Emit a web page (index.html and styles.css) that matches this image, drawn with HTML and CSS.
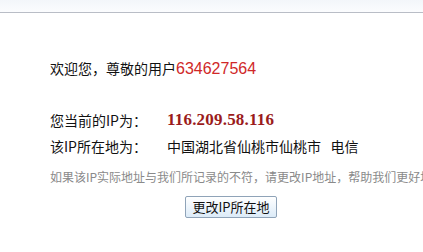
FILE: index.html
```html
<!DOCTYPE html>
<html>
<head>
<meta charset="utf-8">
<link rel="stylesheet" href="styles.css">
</head>
<body>
<div class="topbar"></div>
<div class="content">
  <div class="welcome">欢迎您，尊敬的用户<span class="uid">634627564</span></div>
  <div class="row ip-row"><span class="label">您当前的IP为：</span><span class="ip">116.209.58.116</span></div>
  <div class="row"><span class="label">该IP所在地为：</span><span class="loc">中国湖北省仙桃市仙桃市&nbsp;&nbsp; 电信</span></div>
  <div class="note">如果该IP实际地址与我们所记录的不符，请更改IP地址，帮助我们更好地为您服务。</div>
  <div class="actions"><button class="btn">更改IP所在地</button></div>
</div>
</body>
</html>
```
FILE: styles.css
```css
html, body {
  margin: 0;
  padding: 0;
  background: #fff;
  overflow: hidden;
}
body {
  width: 423px;
  height: 252px;
  font-family: "Noto Sans CJK SC", "Liberation Sans", sans-serif;
  color: #111;
}
.topbar {
  height: 12px;
  background: linear-gradient(#f3f6fa, #fbfcfe);
  border-bottom: 1px solid #b9bdc6;
}
.content {
  padding: 45px 0 0 50px;
  white-space: nowrap;
  overflow: hidden;
}
.welcome {
  font-size: 14px;
  line-height: 20px;
}
.uid {
  color: #d02828;
  font-family: "Liberation Sans", sans-serif;
  font-size: 16px;
}
.row {
  display: flex;
  font-size: 14px;
  line-height: 26px;
}
.ip-row {
  margin-top: 28px;
}
.label {
  width: 117px;
}
.ip {
  color: #9b1c1c;
  font-family: "Liberation Serif", serif;
  font-weight: bold;
  font-size: 17px;
  letter-spacing: 0.2px;
}
.note {
  margin-top: 9px;
  font-size: 12px;
  line-height: 18px;
  color: #8a8a8a;
  overflow: hidden;
  text-overflow: clip;
}
.actions {
  padding: 7px 0 0 135px;
}
.btn {
  font-family: "Noto Sans CJK SC", sans-serif;
  font-size: 13px;
  height: 22px;
  width: 92px;
  padding: 0;
  border: 1px solid #8fa3b8;
  border-radius: 2px;
  background: linear-gradient(#ffffff, #dcebf8);
  color: #111;
}
```
